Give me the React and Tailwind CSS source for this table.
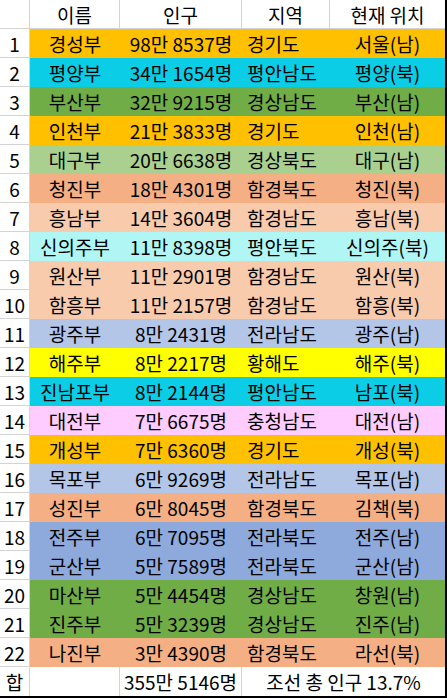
import React from "react";

const rows = [
  ["경성부", "98만 8537명", "경기도", "서울(남)", "bg-[#ffc000]"],
  ["평양부", "34만 1654명", "평안남도", "평양(북)", "bg-[#0bcee6]"],
  ["부산부", "32만 9215명", "경상남도", "부산(남)", "bg-[#70ad47]"],
  ["인천부", "21만 3833명", "경기도", "인천(남)", "bg-[#ffc000]"],
  ["대구부", "20만 6638명", "경상북도", "대구(남)", "bg-[#a9d08e]"],
  ["청진부", "18만 4301명", "함경북도", "청진(북)", "bg-[#f4b084]"],
  ["흥남부", "14만 3604명", "함경남도", "흥남(북)", "bg-[#f8cbad]"],
  ["신의주부", "11만 8398명", "평안북도", "신의주(북)", "bg-[#b0f6f4]"],
  ["원산부", "11만 2901명", "함경남도", "원산(북)", "bg-[#f8cbad]"],
  ["함흥부", "11만 2157명", "함경남도", "함흥(북)", "bg-[#f8cbad]"],
  ["광주부", "8만 2431명", "전라남도", "광주(남)", "bg-[#b4c6e7]"],
  ["해주부", "8만 2217명", "황해도", "해주(북)", "bg-[#ffff00]"],
  ["진남포부", "8만 2144명", "평안남도", "남포(북)", "bg-[#0bcee6]"],
  ["대전부", "7만 6675명", "충청남도", "대전(남)", "bg-[#ffccff]"],
  ["개성부", "7만 6360명", "경기도", "개성(북)", "bg-[#ffc000]"],
  ["목포부", "6만 9269명", "전라남도", "목포(남)", "bg-[#b4c6e7]"],
  ["성진부", "6만 8045명", "함경북도", "김책(북)", "bg-[#f4b084]"],
  ["전주부", "6만 7095명", "전라북도", "전주(남)", "bg-[#8ea9db]"],
  ["군산부", "5만 7589명", "전라북도", "군산(남)", "bg-[#8ea9db]"],
  ["마산부", "5만 4454명", "경상남도", "창원(남)", "bg-[#70ad47]"],
  ["진주부", "5만 3239명", "경상남도", "진주(남)", "bg-[#70ad47]"],
  ["나진부", "3만 4390명", "함경북도", "라선(북)", "bg-[#f4b084]"],
];

const font = { fontFamily: '"Noto Sans CJK KR", "Noto Sans", sans-serif' };

export default function App() {
  return (
    <div className="w-[447px] h-[698px] bg-white text-black" style={font}>
      <div className="w-[447px] border-r-2 border-b-2 border-black grid grid-cols-[30px_90px_122px_88px_115px] auto-rows-[29px] text-[19px] leading-none">
        {/* header */}
        <div className="border-r border-b border-[#d4d4d4]" />
        <div className="border-r border-b border-[#d4d4d4] flex items-center justify-center">이름</div>
        <div className="border-r border-b border-[#d4d4d4] flex items-center justify-center">인구</div>
        <div className="border-r border-b border-[#d4d4d4] flex items-center justify-center">지역</div>
        <div className="border-b border-[#d4d4d4] flex items-center justify-center">현재 위치</div>
        {rows.map(([name, pop, region, loc, bg], i) => (
          <React.Fragment key={i}>
            <div className="border-r border-b border-[#d4d4d4] flex items-center justify-center">{i + 1}</div>
            <div className={`${bg} flex items-center justify-center`}>{name}</div>
            <div className={`${bg} flex items-center justify-center`}>{pop}</div>
            <div className={`${bg} flex items-center pl-[5px]`}>{region}</div>
            <div className={`${bg} flex items-center justify-center`}>{loc}</div>
          </React.Fragment>
        ))}
        {/* total */}
        <div className="border-r border-[#d4d4d4] flex items-center justify-center">합</div>
        <div className="border-r border-[#d4d4d4]" />
        <div className="border-r border-[#d4d4d4] flex items-center justify-center">355만 5146명</div>
        <div className="col-span-2 flex items-center justify-center">조선 총 인구 13.7%</div>
      </div>
    </div>
  );
}
